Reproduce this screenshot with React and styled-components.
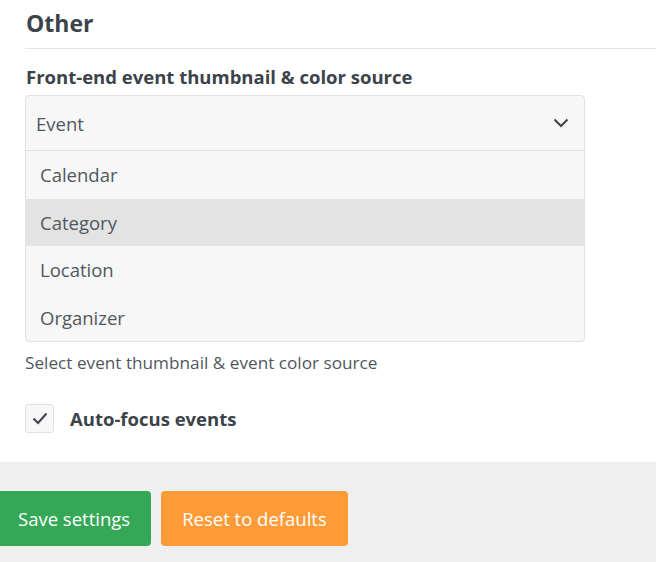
import styled, { createGlobalStyle } from 'styled-components';

const Global = createGlobalStyle`
  html, body {
    margin: 0;
    padding: 0;
    background: #fff;
  }
  body {
    font-family: "Open Sans", "Liberation Sans", sans-serif;
    color: #3c434a;
    overflow: hidden;
  }
`;

const Page = styled.div`
  width: 656px;
  height: 562px;
  display: flex;
  flex-direction: column;
  overflow: hidden;
`;

const Content = styled.div`
  padding: 0 0 0 25px;
  flex: 1;
`;

const Title = styled.h2`
  margin: 0;
  padding: 8px 0 10px 1px;
  font-size: 23px;
  font-weight: 700;
  line-height: 30px;
  color: #3c434a;
  border-bottom: 1px solid #e5e5e5;
`;

const Label = styled.div`
  margin-top: 15px;
  font-size: 18.5px;
  font-weight: 700;
  line-height: 26px;
  padding-left: 1px;
`;

const Select = styled.div`
  margin-top: 5px;
  width: 558px;
  background: #f7f7f7;
  border: 1px solid #e1e1e1;
  border-radius: 4px;
  overflow: hidden;
`;

const Current = styled.div`
  height: 54px;
  display: flex;
  align-items: center;
  justify-content: space-between;
  padding: 0 15px 0 10px;
  font-size: 18.5px;
  color: #50575e;
  border-bottom: 1px solid #e1e1e1;
`;

const Option = styled.div`
  height: 47.5px;
  display: flex;
  align-items: center;
  padding-left: 14px;
  font-size: 18.5px;
  color: #50575e;
  background: ${(p) => (p.active ? '#e3e3e3' : 'transparent')};
`;

const Help = styled.div`
  margin-top: 9px;
  font-size: 17.2px;
  line-height: 24px;
  color: #50575e;
`;

const CheckRow = styled.label`
  margin-top: 29px;
  display: flex;
  align-items: center;
  gap: 16px;
  font-size: 18.5px;
  font-weight: 700;
`;

const Box = styled.span`
  width: 29px;
  height: 29px;
  box-sizing: border-box;
  background: #f7f7f7;
  border: 1px solid #e1e1e1;
  border-radius: 3px;
  display: flex;
  align-items: center;
  justify-content: center;
`;

const Footer = styled.div`
  height: 100px;
  box-sizing: border-box;
  background: #efefef;
  display: flex;
  align-items: flex-start;
  gap: 10px;
  padding-top: 29px;
`;

const Button = styled.button`
  height: 55px;
  border: none;
  border-radius: 4px;
  padding: 0 ${(p) => p.pad}px;
  font-family: inherit;
  font-size: 18.5px;
  color: #fff;
  background: ${(p) => p.color};
  margin-left: ${(p) => p.shift || 0}px;
`;

const Chevron = () => (
  <svg width="16" height="10" viewBox="0 0 16 10" fill="none">
    <path d="M1.5 1.5 L8 8 L14.5 1.5" stroke="#3c434a" strokeWidth="2" />
  </svg>
);

const Check = () => (
  <svg width="16" height="13" viewBox="0 0 16 13" fill="none">
    <path d="M1.5 6.5 L6 11 L14.5 1.5" stroke="#3c434a" strokeWidth="2" />
  </svg>
);

const options = ['Calendar', 'Category', 'Location', 'Organizer'];

const App = () => (
  <Page>
    <Global />
    <Content>
      <Title>Other</Title>
      <Label>Front-end event thumbnail &amp; color source</Label>
      <Select>
        <Current>
          Event
          <Chevron />
        </Current>
        {options.map((o) => (
          <Option key={o} active={o === 'Category'}>
            {o}
          </Option>
        ))}
      </Select>
      <Help>Select event thumbnail &amp; event color source</Help>
      <CheckRow>
        <Box>
          <Check />
        </Box>
        Auto-focus events
      </CheckRow>
    </Content>
    <Footer>
      <Button color="#34a856" pad={21} shift={-3}>
        Save settings
      </Button>
      <Button color="#fe9b37" pad={21}>
        Reset to defaults
      </Button>
    </Footer>
  </Page>
);

export default App;
